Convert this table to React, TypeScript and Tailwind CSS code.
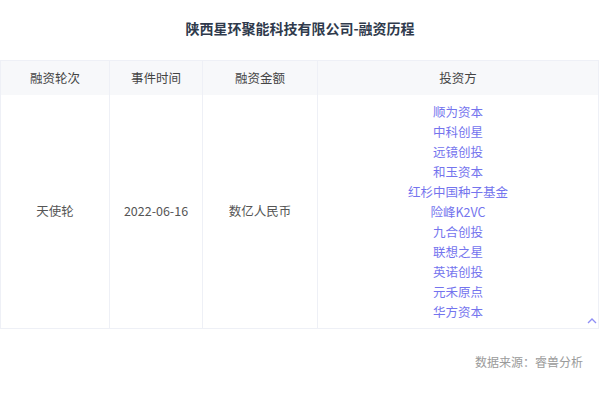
const investors = [
  "顺为资本",
  "中科创星",
  "远镜创投",
  "和玉资本",
  "红杉中国种子基金",
  "险峰K2VC",
  "九合创投",
  "联想之星",
  "英诺创投",
  "元禾原点",
  "华方资本",
]

const font = {
  fontFamily: '"Noto Sans CJK SC", "Noto Sans", sans-serif',
}

export default function App() {
  return (
    <div className="h-[393px] w-[600px] bg-white" style={font}>
      <div className="flex h-[60px] items-center justify-center pb-[4px] text-[14px] font-bold text-[#2f3a4c]">
        陕西星环聚能科技有限公司-融资历程
      </div>
      <div className="w-[599px] border border-[#eef0f6] text-[12.5px]">
        <div className="grid h-[34px] grid-cols-[108px_93px_115px_1fr] bg-[#f7f8fa] text-[#444]">
          <div className="flex items-center justify-center">融资轮次</div>
          <div className="flex items-center justify-center border-l border-[#eef0f6]">事件时间</div>
          <div className="flex items-center justify-center border-l border-[#eef0f6]">融资金额</div>
          <div className="flex items-center justify-center border-l border-[#eef0f6]">投资方</div>
        </div>
        <div className="grid h-[233px] grid-cols-[108px_93px_115px_1fr] text-[#555]">
          <div className="flex items-center justify-center">天使轮</div>
          <div className="flex items-center justify-center border-l border-[#eef0f6]">2022-06-16</div>
          <div className="flex items-center justify-center border-l border-[#eef0f6]">数亿人民币</div>
          <div className="relative flex flex-col items-center border-l border-[#eef0f6] pt-[7px]">
            {investors.map((name) => (
              <div key={name} className="h-[20px] leading-[20px] text-[#7474ee]">
                {name}
              </div>
            ))}
            <svg
              className="absolute right-[1px] bottom-[4px]"
              width="10"
              height="7"
              viewBox="0 0 10 7"
              fill="none"
              stroke="#8e8ef5"
              strokeWidth="1.3"
            >
              <path d="M1 6 L5 2 L9 6" />
            </svg>
          </div>
        </div>
      </div>
      <div className="flex justify-end pt-[24px] pr-[17px] text-[12px] text-[#9a9a9a]">
        数据来源：睿兽分析
      </div>
    </div>
  )
}
